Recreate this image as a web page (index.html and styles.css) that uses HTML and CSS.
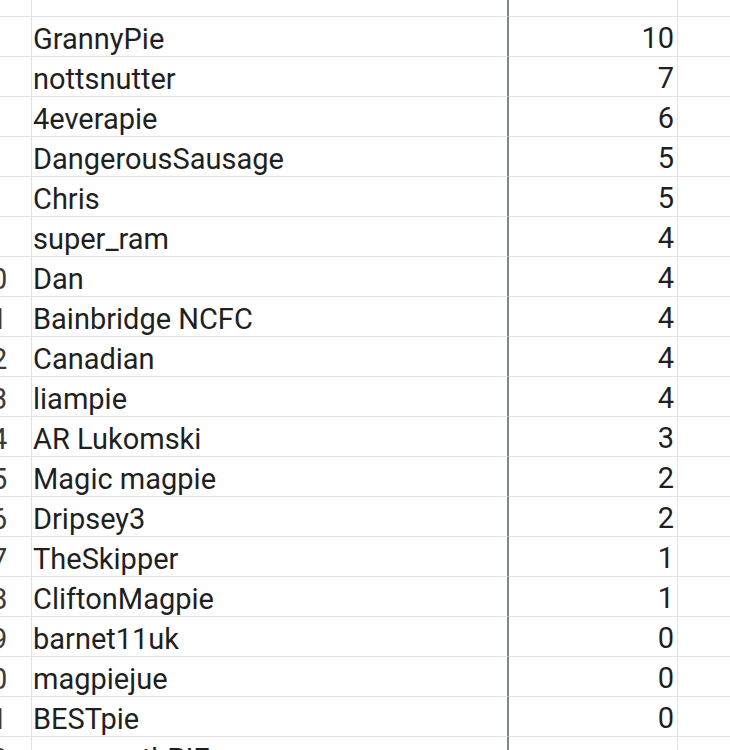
FILE: index.html
```html
<!DOCTYPE html>
<html lang="en">
<head>
<meta charset="utf-8">
<title>Sheet</title>
<link rel="stylesheet" href="styles.css">
</head>
<body>
<div class="sheet">
  <div class="cell head"></div><div class="cell name"></div><div class="cell num"></div><div class="cell rest"></div>

  <div class="cell head">4</div><div class="cell name">GrannyPie</div><div class="cell num">10</div><div class="cell rest"></div>
  <div class="cell head">5</div><div class="cell name">nottsnutter</div><div class="cell num">7</div><div class="cell rest"></div>
  <div class="cell head">6</div><div class="cell name">4everapie</div><div class="cell num">6</div><div class="cell rest"></div>
  <div class="cell head">7</div><div class="cell name">DangerousSausage</div><div class="cell num">5</div><div class="cell rest"></div>
  <div class="cell head">8</div><div class="cell name">Chris</div><div class="cell num">5</div><div class="cell rest"></div>
  <div class="cell head">9</div><div class="cell name">super_ram</div><div class="cell num">4</div><div class="cell rest"></div>
  <div class="cell head">10</div><div class="cell name">Dan</div><div class="cell num">4</div><div class="cell rest"></div>
  <div class="cell head">11</div><div class="cell name">Bainbridge NCFC</div><div class="cell num">4</div><div class="cell rest"></div>
  <div class="cell head">12</div><div class="cell name">Canadian</div><div class="cell num">4</div><div class="cell rest"></div>
  <div class="cell head">13</div><div class="cell name">liampie</div><div class="cell num">4</div><div class="cell rest"></div>
  <div class="cell head">14</div><div class="cell name">AR Lukomski</div><div class="cell num">3</div><div class="cell rest"></div>
  <div class="cell head">15</div><div class="cell name">Magic magpie</div><div class="cell num">2</div><div class="cell rest"></div>
  <div class="cell head">16</div><div class="cell name">Dripsey3</div><div class="cell num">2</div><div class="cell rest"></div>
  <div class="cell head">17</div><div class="cell name">TheSkipper</div><div class="cell num">1</div><div class="cell rest"></div>
  <div class="cell head">18</div><div class="cell name">CliftonMagpie</div><div class="cell num">1</div><div class="cell rest"></div>
  <div class="cell head">19</div><div class="cell name">barnet11uk</div><div class="cell num">0</div><div class="cell rest"></div>
  <div class="cell head">20</div><div class="cell name">magpiejue</div><div class="cell num">0</div><div class="cell rest"></div>
  <div class="cell head">21</div><div class="cell name">BESTpie</div><div class="cell num">0</div><div class="cell rest"></div>
  <div class="cell head">22</div><div class="cell name">weymouthPIE</div><div class="cell num"></div><div class="cell rest"></div>
</div>
</body>
</html>
```
FILE: styles.css
```css
html, body {
  margin: 0;
  padding: 0;
  background: #ffffff;
  overflow: hidden;
  width: 730px;
  height: 750px;
}

.sheet {
  display: grid;
  grid-template-columns: 81px 477px 169px 100px;
  grid-template-rows: 17px;
  grid-auto-rows: 40px;
  margin-left: -49px;
  font-family: Roboto, "Noto Sans", "Liberation Sans", sans-serif;
  color: #1f1f1f;
}

.cell {
  box-sizing: border-box;
  border-right: 1px solid #e3e3e3;
  border-bottom: 1px solid #e3e3e3;
  display: flex;
  align-items: flex-end;
  white-space: nowrap;
  overflow: hidden;
  line-height: normal;
  font-size: 29px;
}

.head {
  justify-content: center;
  color: #3a3a3a;
}

.name {
  padding-left: 1px;
  border-right: 2px solid #7d8787;
}

.num {
  justify-content: flex-end;
  padding-right: 3px;
  padding-bottom: 1px;
}

.rest {
  border-right: none;
}
```
